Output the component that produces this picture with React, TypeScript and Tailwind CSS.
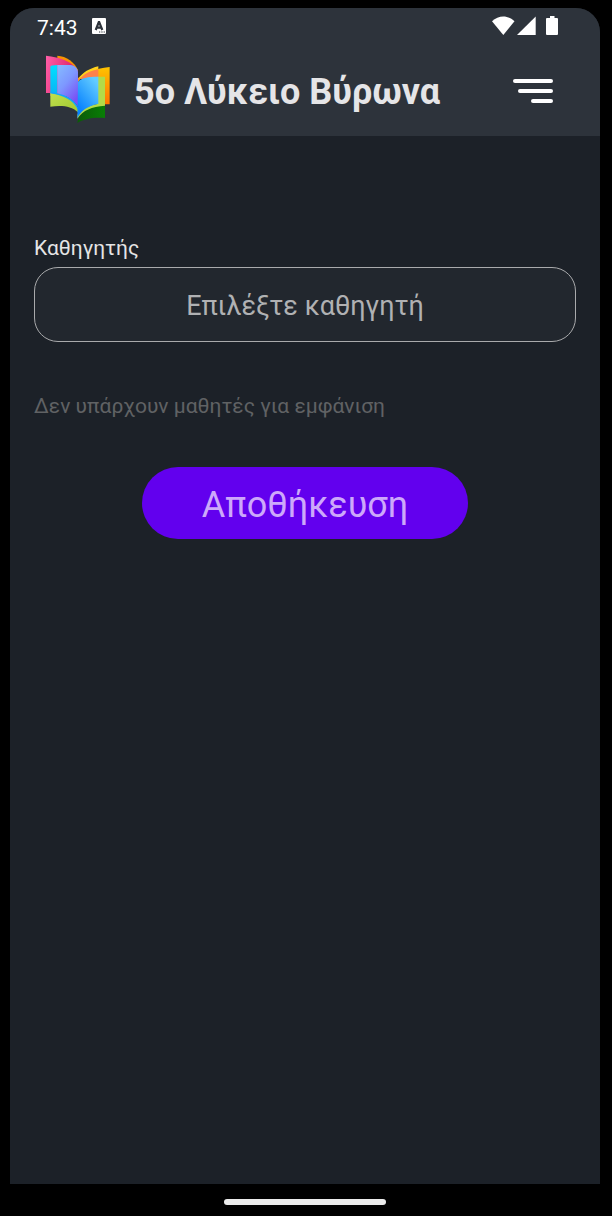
import React from "react";

function BookLogo() {
  return (
    <svg viewBox="30 27 192 204" className="h-[68px] w-16 shrink-0" aria-hidden="true">
      <defs>
        <linearGradient id="pink" x1="0" y1="0" x2="1" y2="0.3">
          <stop offset="0" stopColor="#ff5fa8" />
          <stop offset="1" stopColor="#d81b60" />
        </linearGradient>
        <linearGradient id="violet" x1="0" y1="0" x2="0.6" y2="1">
          <stop offset="0" stopColor="#86bcff" />
          <stop offset="0.5" stopColor="#7d98ff" />
          <stop offset="1" stopColor="#7a50f5" />
        </linearGradient>
        <linearGradient id="blue" x1="0.7" y1="0" x2="0.2" y2="0.8">
          <stop offset="0" stopColor="#62cbff" />
          <stop offset="1" stopColor="#0a84ff" />
        </linearGradient>
        <linearGradient id="orange" x1="0" y1="0" x2="0" y2="1">
          <stop offset="0" stopColor="#ffc400" />
          <stop offset="1" stopColor="#ff7400" />
        </linearGradient>
        <linearGradient id="cyan" x1="0" y1="0" x2="0" y2="1">
          <stop offset="0" stopColor="#00e0ff" />
          <stop offset="1" stopColor="#0ab4f5" />
        </linearGradient>
        <linearGradient id="lime" x1="0" y1="0" x2="1" y2="1">
          <stop offset="0" stopColor="#c2e04f" />
          <stop offset="1" stopColor="#9fc92f" />
        </linearGradient>
        <linearGradient id="green" x1="0" y1="0" x2="1" y2="0">
          <stop offset="0" stopColor="#0b5a08" />
          <stop offset="1" stopColor="#087f05" />
        </linearGradient>
      </defs>
      <path d="M64 29C91 30 117 50 126 72V90H64Z" fill="#f79400" />
      <path d="M30 29C72 33 112 47 126 76V150H43V141H30Z" fill="url(#pink)" />
      <path d="M43 139C82 143 113 160 126 188V199C106 180 79 178 43 182Z" fill="url(#lime)" />
      <path d="M43 62Q43 57 64 57V145L43 141Z" fill="url(#cyan)" />
      <path d="M64 57H102C118 59 126 67 126 80V182C111 159 88 148 64 144Z" fill="url(#violet)" />
      <path d="M43 137C85 144 113 157 126 183V191C110 162 86 149 43 142Z" fill="#15a5fa" />
      <path d="M126 99C140 79 161 67 187 61V98H126Z" fill="#ffd21c" />
      <path d="M221 63V175H206V95H126V108C142 83 175 68 221 63Z" fill="url(#orange)" />
      <path d="M126 105C142 84 162 75 187 70V98H126Z" fill="#ff8149" />
      <path d="M124 231C129 196 163 180 207 177V216C172 213 143 219 124 231Z" fill="url(#green)" />
      <path d="M184 92H207V179C167 182 141 192 124 218V206C137 189 158 178 184 174Z" fill="#b2db48" />
      <path d="M126 107C137 96 154 92 187 92V173C155 181 134 193 124 217Z" fill="url(#blue)" />
    </svg>
  );
}

function KeyboardBadge() {
  return (
    <svg viewBox="0 0 14 16" className="h-4 w-3.5" aria-hidden="true">
      <rect width="14" height="16" rx="1" fill="#fff" />
      <path d="M3.700 12 6.800 4h.4l3.100 8M4.700 9.600h4.600" fill="none" stroke="#2d333b" strokeWidth="2.200" />
      <path d="M7 14h1.300M9.300 14h1.300M11.600 14h1.300" stroke="#2d333b" strokeWidth="1.200" />
    </svg>
  );
}

function StatusIcons() {
  return (
    <svg viewBox="0 0 66 20" className="h-5 w-[66px]" fill="#fff" aria-hidden="true">
      <path d="M0 5.200C6.500-1.200 16-1.200 22.500 5.200L11.300 19Z" />
      <path d="M43.700.500V19H25Z" />
      <path d="M58 0h4.500v2H65a1 1 0 0 1 1 1v15a1 1 0 0 1-1 1H55a1 1 0 0 1-1-1V3a1 1 0 0 1 1-1h3Z" />
    </svg>
  );
}

export default function App() {
  return (
    <div className="flex min-h-screen flex-col bg-black pt-2 pr-3 pl-[10px] font-['Roboto','Noto_Sans',sans-serif]">
      <div className="flex grow flex-col overflow-hidden rounded-t-3xl bg-[#1c2128]">
        <header className="bg-[#2d333b]">
          <div className="flex h-9 items-center justify-between pr-[42px] pl-[27px]">
            <div className="flex items-center gap-3.5 text-[21px] text-white">
              <time className="pt-1 leading-7">7:43</time>
              <KeyboardBadge />
            </div>
            <StatusIcons />
          </div>
          <div className="flex h-[92px] items-start justify-between pt-[11px] pr-[47px] pl-9">
            <div className="flex items-center gap-6">
              <BookLogo />
              <h1 className="pt-1.5 text-4xl font-bold whitespace-nowrap text-[#e5e5e7]">5ο Λύκειο Βύρωνα</h1>
            </div>
            <button type="button" aria-label="Μενού" className="mt-6 flex w-10 flex-col items-end gap-1.5">
              <span className="h-1 w-full rounded-full bg-white" />
              <span className="h-1 w-[35px] rounded-full bg-white" />
              <span className="h-1 w-[22px] rounded-full bg-white" />
            </button>
          </div>
        </header>

        <main className="flex flex-col px-6 pt-24">
          <label htmlFor="teacher" className="text-[21px] leading-8 text-[#e5e5e5]">
            Καθηγητής
          </label>
          <select
            id="teacher"
            defaultValue=""
            className="mt-[3px] h-[75px] w-full appearance-none rounded-3xl border border-[#a9aaac] bg-[#22272e] pt-1 text-center text-[27px] text-[#b0b1b3] [text-align-last:center]"
          >
            <option value="">Επιλέξτε καθηγητή</option>
          </select>
          <p className="mt-12 text-[21px] leading-8 text-[#606264]">Δεν υπάρχουν μαθητές για εμφάνιση</p>
          <button
            type="button"
            className="mt-[45px] h-[72px] w-3/5 self-center rounded-full bg-[#6200ee] pt-1 text-4xl text-[#cda8fa]"
          >
            Αποθήκευση
          </button>
        </main>
      </div>
      <div className="flex h-8 shrink-0 items-center justify-center pt-1">
        <div className="h-1.5 w-[162px] rounded-full bg-[#ebebeb]" />
      </div>
    </div>
  );
}
